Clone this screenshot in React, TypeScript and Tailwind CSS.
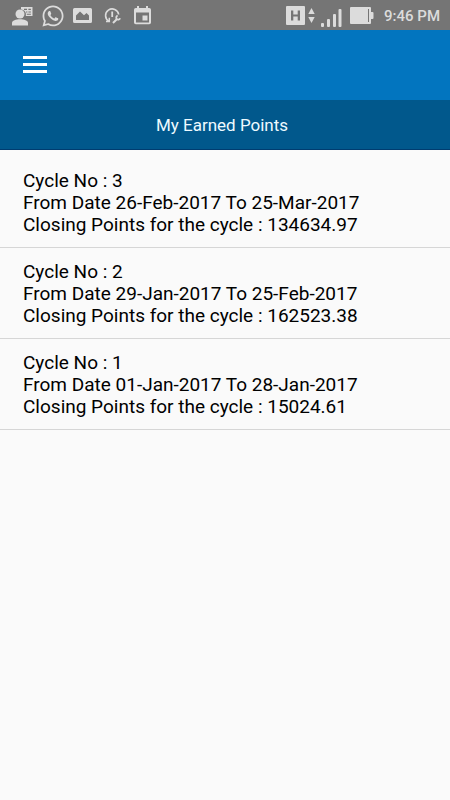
import { FaWhatsapp } from "react-icons/fa";

type Cycle = { no: number; from: string; to: string; points: string };

const cycles: Cycle[] = [
  { no: 3, from: "26-Feb-2017", to: "25-Mar-2017", points: "134634.97" },
  { no: 2, from: "29-Jan-2017", to: "25-Feb-2017", points: "162523.38" },
  { no: 1, from: "01-Jan-2017", to: "28-Jan-2017", points: "15024.61" },
];

function ContactIcon() {
  return (
    <svg width="21" height="20" viewBox="0 0 21 20" fill="currentColor" aria-hidden="true">
      <circle cx="8" cy="8" r="4.500" />
      <path d="M0 19.500v-2.500C0 14.500 4 13.300 8 13.300s8 1.200 8 3.700v2.500z" />
      <path fillRule="evenodd" d="M9 1h11.500v9h-6.700c.6-3.500-.8-5.800-4.800-6.700zM12 2.800v1.200h3V2.800zm4.400 0v1.200h2.500V2.800zM14 5.400v1h1.400v-1zm2.400 0v1h2.500v-1zM14.800 7.800v1h4.100v-1z" />
    </svg>
  );
}

function PictureIcon() {
  return (
    <svg width="19" height="16" viewBox="0 0 19 16" fill="currentColor" aria-hidden="true">
      <path fillRule="evenodd" d="M1.500 0h16A1.500 1.500 0 0 1 19 1.500v12a1.500 1.500 0 0 1-1.500 1.500h-16A1.500 1.500 0 0 1 0 13.500v-12A1.500 1.500 0 0 1 1.500 0zM3 12h13V7.500L13.500 5 11 7.200 7 3.500 3 7.500z" />
    </svg>
  );
}

function ServiceIcon() {
  return (
    <svg width="18" height="17" viewBox="0 0 18 17" fill="none" stroke="currentColor" aria-hidden="true">
      <path strokeWidth="1.600" d="M5 14.300A6.600 6.600 0 1 1 14.700 7.500" />
      <path strokeWidth="1.800" d="M8.200 4.500v5.500" />
      <path strokeWidth="1.500" d="M5.300 10.800v3.700H2" />
      <path strokeWidth="2" d="M9 16l4.300-4.300" />
      <path strokeWidth="1.800" d="M13.700 8.700a2 2 0 1 0 2.400 2.600" />
    </svg>
  );
}

function EventIcon() {
  return (
    <svg width="17" height="19" viewBox="0 0 17 19" fill="currentColor" aria-hidden="true">
      <path fillRule="evenodd" d="M3 0h2v2h7V0h2v2h1.200A1.800 1.800 0 0 1 17 3.800v12.700a1.800 1.800 0 0 1-1.800 1.800H1.800A1.800 1.800 0 0 1 0 16.500V3.800A1.800 1.800 0 0 1 1.800 2H3zM2 6.500v10h13v-10z" />
      <path d="M8.500 9.500h5v5h-5z" />
    </svg>
  );
}

function NetworkIcon() {
  return (
    <svg width="29" height="19" viewBox="0 0 29 19" fill="currentColor" aria-hidden="true">
      <path fillRule="evenodd" d="M1 0h17a1 1 0 0 1 1 1v17a1 1 0 0 1-1 1H1a1 1 0 0 1-1-1V1a1 1 0 0 1 1-1zM5 4.500v10h2.300v-4h4.400v4H14v-10h-2.300v4H7.300v-4z" />
      <path d="M25.500 2l3.200 6h-6.400zM25.500 17l3.200-6h-6.400z" />
    </svg>
  );
}

function SignalIcon() {
  return (
    <svg width="21" height="18" viewBox="0 0 21 18" fill="currentColor" aria-hidden="true">
      <rect x="0" y="14" width="3" height="4" rx="1" />
      <rect x="6" y="10" width="3" height="8" rx="1" />
      <rect x="12" y="5" width="3" height="13" rx="1" />
      <rect x="17.500" y="0" width="3" height="18" rx="1" />
    </svg>
  );
}

function BatteryIcon() {
  return (
    <svg width="24" height="17" viewBox="0 0 24 17" fill="currentColor" aria-hidden="true">
      <path fillRule="evenodd" d="M1 0h19a1 1 0 0 1 1 1v4h1.500a1 1 0 0 1 1 1v5a1 1 0 0 1-1 1H21v4a1 1 0 0 1-1 1H1a1 1 0 0 1-1-1V1a1 1 0 0 1 1-1zM18 2v13h1V2z" />
    </svg>
  );
}

function StatusBar() {
  return (
    <div className="flex h-[30px] items-center justify-between bg-[#757575] pt-px pr-2.5 pl-3 text-[#dcdcdc]">
      <div className="flex items-center gap-3">
        <div className="flex items-center gap-2">
          <ContactIcon />
          <FaWhatsapp size={24} aria-hidden="true" />
          <PictureIcon />
        </div>
        <ServiceIcon />
        <EventIcon />
      </div>
      <div className="flex items-center gap-2">
        <div className="flex items-center gap-1.5">
          <NetworkIcon />
          <div className="pt-1">
            <SignalIcon />
          </div>
        </div>
        <BatteryIcon />
        <span className="pl-0.5 text-[15px] leading-5 font-medium">9:46 PM</span>
      </div>
    </div>
  );
}

export default function App() {
  return (
    <div className="min-h-screen bg-[#fafafa] font-['Roboto',sans-serif] text-black">
      <StatusBar />
      <header>
        <div className="flex h-[70px] items-center bg-[#0275bf] px-[23px] pb-px">
          <button type="button" aria-label="Open menu" className="flex w-6 flex-col gap-1">
            <span className="h-[3px] bg-white" />
            <span className="h-[3px] bg-white" />
            <span className="h-[3px] bg-white" />
          </button>
        </div>
        <h1 className="flex h-[50px] items-center justify-center border-b border-[#003c70] bg-[#01588c] pr-1.5 text-[17px] leading-6 text-[#eefaff]">
          My Earned Points
        </h1>
      </header>
      <main>
        <ul className="pt-[7px]">
          {cycles.map((cycle) => (
            <li key={cycle.no} className="border-b border-[#d6d6d6] px-[23px] pt-[13px] pb-[11px] text-[19px] leading-[22px]">
              <p>Cycle No : {cycle.no}</p>
              <p>
                From Date {cycle.from} To {cycle.to}
              </p>
              <p>Closing Points for the cycle : {cycle.points}</p>
            </li>
          ))}
        </ul>
      </main>
    </div>
  );
}
